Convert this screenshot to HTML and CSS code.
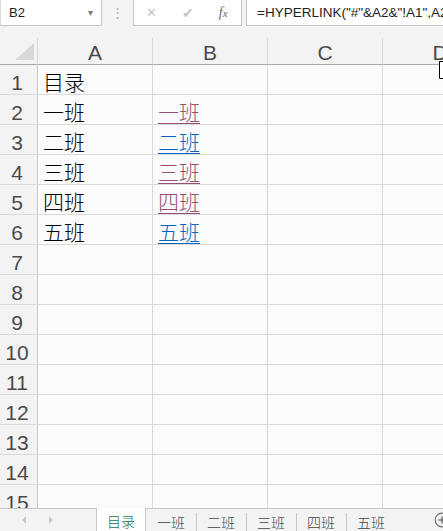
FILE: index.html
```html
<!DOCTYPE html>
<html>
  <head>
    <meta charset="utf-8">
    <title>目录 - Excel</title>
    <link rel="stylesheet" href="styles.css">
  </head>
  <body>
    <div class="window">
      <!-- name box + formula bar -->
      <div class="topbar">
        <div class="name-box">
          <span>B2</span>
          <span class="drop">&#9662;</span>
        </div>
        <div class="grip">&#8942;</div>
        <div class="fx-buttons">
          <span class="btn-x">&#10005;</span>
          <span class="btn-ok">&#10004;</span>
          <span class="btn-fx">f<small>x</small></span>
        </div>
        <div class="formula">=HYPERLINK("#"&amp;A2&amp;"!A1",A2)</div>
      </div>

      <!-- sheet grid -->
      <div class="sheet">
        <div class="hd corner"><span class="tri"></span></div>
        <div class="hd col">A</div>
        <div class="hd col">B</div>
        <div class="hd col">C</div>
        <div class="hd col">D</div>

        <div class="rn">1</div><div class="cell">目录</div><div class="cell"></div><div class="cell"></div><div class="cell"></div>
        <div class="rn">2</div><div class="cell">一班</div><div class="cell"><a class="link visited">一班</a></div><div class="cell"></div><div class="cell"></div>
        <div class="rn">3</div><div class="cell">二班</div><div class="cell"><a class="link">二班</a></div><div class="cell"></div><div class="cell"></div>
        <div class="rn">4</div><div class="cell">三班</div><div class="cell"><a class="link visited">三班</a></div><div class="cell"></div><div class="cell"></div>
        <div class="rn">5</div><div class="cell">四班</div><div class="cell"><a class="link visited">四班</a></div><div class="cell"></div><div class="cell"></div>
        <div class="rn">6</div><div class="cell">五班</div><div class="cell"><a class="link">五班</a></div><div class="cell"></div><div class="cell"></div>
        <div class="rn">7</div><div class="cell"></div><div class="cell"></div><div class="cell"></div><div class="cell"></div>
        <div class="rn">8</div><div class="cell"></div><div class="cell"></div><div class="cell"></div><div class="cell"></div>
        <div class="rn">9</div><div class="cell"></div><div class="cell"></div><div class="cell"></div><div class="cell"></div>
        <div class="rn">10</div><div class="cell"></div><div class="cell"></div><div class="cell"></div><div class="cell"></div>
        <div class="rn">11</div><div class="cell"></div><div class="cell"></div><div class="cell"></div><div class="cell"></div>
        <div class="rn">12</div><div class="cell"></div><div class="cell"></div><div class="cell"></div><div class="cell"></div>
        <div class="rn">13</div><div class="cell"></div><div class="cell"></div><div class="cell"></div><div class="cell"></div>
        <div class="rn">14</div><div class="cell"></div><div class="cell"></div><div class="cell"></div><div class="cell"></div>
        <div class="rn">15</div><div class="cell"></div><div class="cell"></div><div class="cell"></div><div class="cell"></div>
      </div>

      <!-- sheet tabs -->
      <div class="tabbar">
        <div class="tab-nav">
          <span class="nav-prev"></span>
          <span class="nav-next"></span>
        </div>
        <div class="tab active">目录</div>
        <div class="tab">一班</div>
        <div class="tab">二班</div>
        <div class="tab">三班</div>
        <div class="tab">四班</div>
        <div class="tab">五班</div>
        <div class="tab-rest">
          <svg class="add" width="16" height="16" viewBox="0 0 16 16">
            <circle cx="8" cy="8" r="6.8" fill="none" stroke="#6f6f6f" stroke-width="1.2"/>
            <path d="M8 4.5v7M4.5 8h7" stroke="#6f6f6f" stroke-width="1.4"/>
          </svg>
        </div>
      </div>

      <svg class="cursor" width="6" height="18" viewBox="0 0 6 18">
        <path d="M0.5 0.5h5.5v17h-5.5z" fill="#fff" stroke="#000" stroke-width="1"/>
      </svg>
    </div>
  </body>
</html>
```

FILE: styles.css
```css
body {
  margin: 0;
  background: #f3f3f3;
  font-family: "Liberation Sans", "Noto Sans CJK SC", sans-serif;
  overflow: hidden;
}

.window {
  position: relative;
  width: 443px;
  height: 531px;
  display: flex;
  flex-direction: column;
  overflow: hidden;
}

/* formula bar */
.topbar {
  height: 38px;
  flex: none;
  display: flex;
  align-items: flex-start;
  background: #f3f3f3;
}

.name-box {
  box-sizing: border-box;
  width: 102px;
  height: 26px;
  display: flex;
  align-items: center;
  justify-content: space-between;
  padding: 0 8px 0 8px;
  background: #fff;
  border: 1px solid #c6c6c6;
  border-top: none;
  border-left-color: #dcdcdc;
  font-size: 13px;
  color: #222;
}

.name-box .drop {
  font-size: 10px;
  color: #777;
}

.grip {
  width: 31px;
  height: 26px;
  text-align: center;
  line-height: 26px;
  font-size: 13px;
  color: #b0b0b0;
}

.fx-buttons {
  box-sizing: border-box;
  width: 109px;
  height: 26px;
  display: flex;
  align-items: center;
  background: #fff;
  border: 1px solid #c6c6c6;
  border-top: none;
}

.fx-buttons span {
  flex: 1;
  text-align: center;
  color: #c4c4c4;
  font-size: 14px;
}

.fx-buttons .btn-x {
  font-size: 13px;
}

.fx-buttons .btn-fx {
  color: #6a6a6a;
  font-family: "Liberation Serif", serif;
  font-style: italic;
  font-size: 14px;
}

.fx-buttons .btn-fx small {
  font-size: 11px;
}

.formula {
  box-sizing: border-box;
  flex: 1;
  margin-left: 4px;
  height: 26px;
  padding-left: 10px;
  line-height: 25px;
  background: #fff;
  border: 1px solid #c6c6c6;
  border-top: none;
  border-right: none;
  font-size: 13.5px;
  color: #222;
  white-space: nowrap;
  overflow: hidden;
}

/* grid */
.sheet {
  flex: 1;
  display: grid;
  grid-template-columns: 38px 115px 115px 115px 115px;
  grid-template-rows: 27px;
  grid-auto-rows: 30px;
  background: #fbfbfb;
  overflow: hidden;
}

.sheet > div {
  box-sizing: border-box;
  border-right: 1px solid #dadada;
  border-bottom: 1px solid #dadada;
  overflow: hidden;
}

.hd {
  background: #f3f3f3;
  border-bottom-color: #ababab !important;
}

.col {
  display: flex;
  align-items: flex-end;
  justify-content: center;
  font-size: 21px;
  line-height: 23px;
  color: #4a4a4a;
}

.corner {
  border-right-color: #dadada;
  position: relative;
}

.corner .tri {
  position: absolute;
  right: 3px;
  bottom: 4px;
  width: 0;
  height: 0;
  border-left: 19px solid transparent;
  border-bottom: 17px solid #d8d8d8;
}

.rn {
  display: flex;
  align-items: flex-end;
  justify-content: center;
  padding-right: 3px;
  background: #f3f3f3;
  border-right-color: #c8c8c8 !important;
  font-size: 21px;
  line-height: 23px;
  color: #4a4a4a;
}

.cell {
  display: flex;
  align-items: flex-end;
  padding-left: 5px;
  font-size: 21px;
  font-weight: 300;
  line-height: 23px;
  color: #000;
  white-space: nowrap;
}

.link {
  color: #0563c1;
  text-decoration: underline;
  text-decoration-thickness: 1px;
  text-underline-offset: 3px;
}

.link.visited {
  color: #954f72;
}

/* sheet tabs */
.tabbar {
  height: 23px;
  flex: none;
  display: flex;
  background: #f3f3f3;
  font-size: 14px;
  font-weight: 300;
  color: #444;
}

.tab-nav {
  box-sizing: border-box;
  width: 96px;
  border-top: 1px solid #c6c6c6;
  display: flex;
  align-items: center;
  padding-left: 22px;
  gap: 23px;
}

.nav-prev,
.nav-next {
  width: 0;
  height: 0;
  border-top: 4px solid transparent;
  border-bottom: 4px solid transparent;
}

.nav-prev {
  border-right: 4px solid #c8c8c8;
}

.nav-next {
  border-left: 4px solid #c8c8c8;
}

.tab {
  box-sizing: border-box;
  width: 50px;
  border-top: 1px solid #c6c6c6;
  display: flex;
  align-items: center;
  justify-content: center;
  padding-top: 3px;
  position: relative;
}

.tab + .tab::before {
  content: "";
  position: absolute;
  left: 0;
  top: 4px;
  bottom: 0;
  border-left: 1px solid #c6c6c6;
}

.tab.active {
  width: 50px;
  border-top: none;
  border-left: 1px solid #c6c6c6;
  border-right: 1px solid #c6c6c6;
  background: #fff;
  color: #217346;
}

.tab.active + .tab::before {
  display: none;
}

.tab:last-of-type {
  border-right: 1px solid #c6c6c6;
  width: 49px;
}

.tab-rest {
  flex: 1;
  border-top: 1px solid #c6c6c6;
  display: flex;
  align-items: center;
  justify-content: flex-end;
  margin-left: -1px;
}

.tab-rest .add {
  margin-right: -7px;
}

/* mouse pointer over column D */
.cursor {
  position: absolute;
  left: 439px;
  top: 61px;
}
```
